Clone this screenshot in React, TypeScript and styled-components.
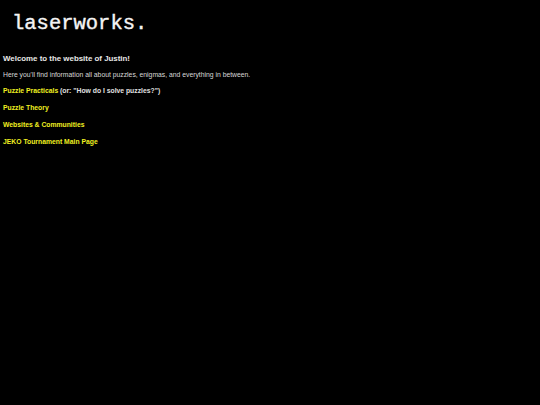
import React from 'react';
import styled, { createGlobalStyle } from 'styled-components';

const GlobalStyle = createGlobalStyle`
  html, body {
    margin: 0;
    background: #000;
  }
  body {
    font-family: 'Liberation Sans', Arial, sans-serif;
    color: #e0e0e0;
  }
`;

const Page = styled.div`
  padding: 0 3px;
`;

const Logo = styled.h1`
  font-family: 'Liberation Mono', 'Courier New', monospace;
  font-weight: normal;
  font-size: 20.5px;
  color: #f4f4f4;
  -webkit-text-stroke: 0.4px #f4f4f4;
  margin: 0;
  padding: 14px 0 0 9px;
  line-height: 20px;
`;

const Welcome = styled.h2`
  font-size: 7.9px;
  font-weight: bold;
  margin: 20px 0 0;
  color: #e8e8e8;
`;

const Intro = styled.p`
  font-size: 6.8px;
  margin: 8px 0 0;
  color: #d8d8d8;
`;

const LinkList = styled.div`
  display: flex;
  flex-direction: column;
  gap: 8px;
  margin-top: 8px;
`;

const Item = styled.div`
  font-size: 6.8px;
  font-weight: bold;
  color: #e0e0e0;
  line-height: 9px;
`;

const Link = styled.a`
  color: #f0f020;
  text-decoration: none;
`;

const links: { label: string; note?: string }[] = [
  { label: 'Puzzle Practicals', note: ' (or: "How do I solve puzzles?")' },
  { label: 'Puzzle Theory' },
  { label: 'Websites & Communities' },
  { label: 'JEKO Tournament Main Page' }
];

export default function App() {
  return (
    <Page>
      <GlobalStyle />
      <Logo>laserworks.</Logo>
      <Welcome>Welcome to the website of Justin!</Welcome>
      <Intro>
        Here you'll find information all about puzzles, enigmas, and everything in between.
      </Intro>
      <LinkList>
        {links.map((l) => (
          <Item key={l.label}>
            <Link href="#">{l.label}</Link>
            {l.note}
          </Item>
        ))}
      </LinkList>
    </Page>
  );
}
